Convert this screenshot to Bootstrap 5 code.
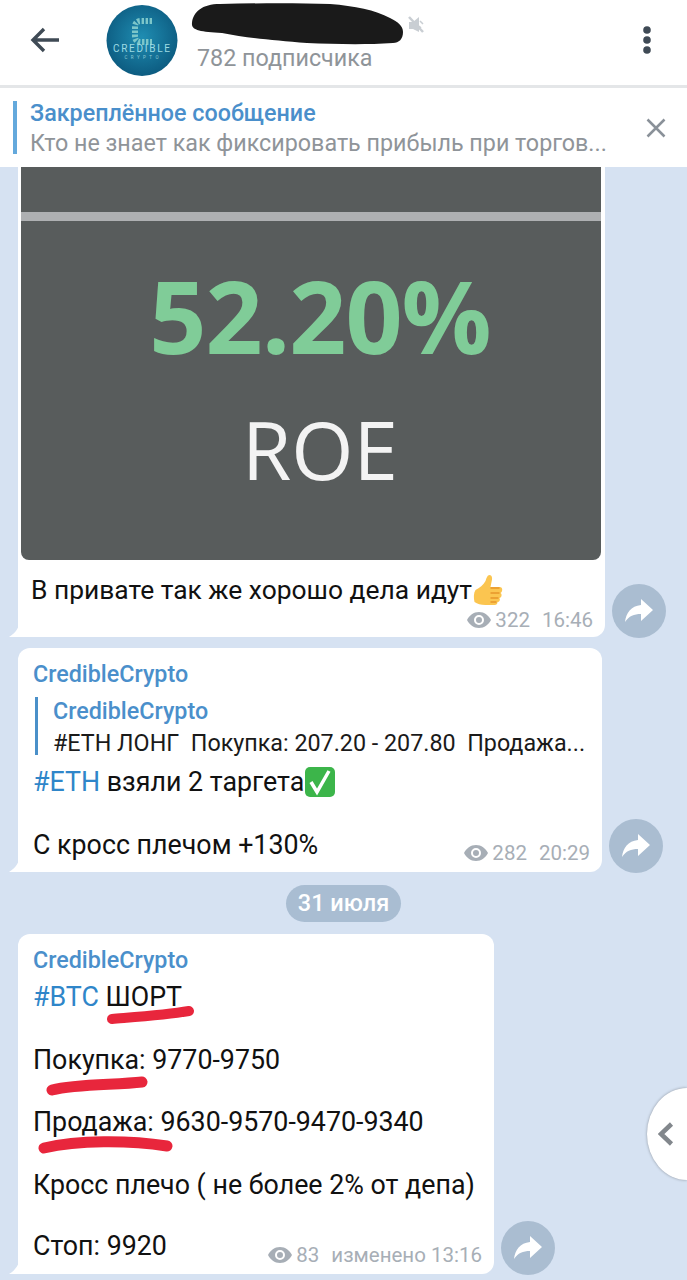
<!DOCTYPE html>
<html lang="ru"><head><meta charset="utf-8">
<link rel="stylesheet" href="https://cdn.jsdelivr.net/npm/bootstrap@5.3.0/dist/css/bootstrap.min.css">
<style>
html,body{height:1280px;overflow:hidden}
body{background:#d6e2f2;font-family:Roboto,"Liberation Sans",sans-serif;color:#111;position:relative;width:687px}
.tg-head{height:88px;background:#fff;border-bottom:3px solid #e4e6e8;padding:0 34px 5px 30px}
.tg-ava{width:72px;height:71px;margin:0 19px 0 0}
.tg-sub{font-size:23.3px;color:#8f9499;line-height:28px;margin-top:44px}
.tg-pin{height:79px;background:#fff;padding:0 21px 0 13px}
.tg-pinbar{width:4px;height:53px;background:#64a9dc;margin-right:13px}
.tg-pintxt{margin-top:2px}
.tg-pint{font-size:23.3px;font-weight:500;color:#4a8fcb;line-height:29px}
.tg-pins{font-size:23.3px;color:#8f9499;line-height:31px;white-space:nowrap}
.bub{background:#fff;border-radius:0 0 12px 0;position:relative}
.bub-a{width:587px;height:470px;margin-left:18px;padding:0 4px 0 3px}
.bub-b{width:584px;height:224px;margin:11px 0 0 18px;border-radius:12px 12px 12px 0;padding:12px 14px 12px 15px}
.bub-c{width:476px;height:340px;margin:0 0 0 18px;border-radius:12px 12px 12px 0;padding:12px 14px 12px 15px}
.tail{position:absolute;left:-9px;bottom:0;width:11px;height:18px}
.shot{height:393px;background:#585c5c;border-radius:0 0 8px 8px;overflow:hidden;padding-left:18px}
.shot-line{height:9px;background:#aeb0b2;margin:45px 0 0 -18px}
.shot-num{font-family:"Open Sans",sans-serif;font-weight:700;font-size:100px;line-height:100px;color:#80cc98;margin-top:44px;letter-spacing:-1px;filter:blur(.6px)}
.shot-roe{font-family:"Open Sans",sans-serif;font-size:80px;line-height:80px;color:#f3f3f3;margin-top:44px;filter:blur(.4px)}
.msgtext{font-size:26.8px;line-height:31px;white-space:nowrap}
.msg-first{margin:14px 0 0 10px;height:32px;font-size:26.4px}
.msg-eth{height:32px}
.msg-cross{margin-top:32px}
.who{font-size:23.3px;font-weight:500;color:#4a8fcb;line-height:28px}
.hash{color:#2f86c9}
.meta{position:absolute;right:12px;bottom:7px;color:#a7aeb6;font-size:20.5px;line-height:24px;white-space:nowrap}
.meta-a{bottom:5px}
.fwd{position:absolute;width:54px;height:54px;border-radius:50%;background:#aabdd1;right:-61px;bottom:-1px}
.reply{border-left:3px solid #4a90c9;padding-left:15px;margin:9px 0 11px 2px;height:58px}
.reply-t{font-size:23.3px;font-weight:500;color:#4a8fcb;line-height:28px}
.reply-s{font-size:23.3px;line-height:30px;margin-top:3px;white-space:nowrap;color:#1a1a1a}
.date-row{height:62px}
.date-pill{background:#a9bdd2;color:#fff;font-size:23.5px;font-weight:500;border-radius:19px;padding:0 12px;height:37px;line-height:37px}
.btc-line{margin-top:8px;height:62.500px}
.ln{height:62.500px}
.ln-s{height:61px}
.scrib{position:absolute;pointer-events:none}
.hidden-name{position:absolute;left:190px;top:0}
.side{position:absolute;right:0;top:1088px;width:40px;height:92px;background:#fff;border-radius:40px 0 0 40px / 46px 0 0 46px;box-shadow:0 0 3px rgba(0,0,0,.35);padding-left:11px}
</style></head><body>
<header class="tg-head d-flex align-items-center">
<svg width="30" height="28" viewBox="0 0 30 28" class="flex-shrink-0" style="margin-right:46px"><path d="M29 14H3.500M14 3 3 14 14 25" fill="none" stroke="#3f4a55" stroke-width="3.400"/></svg>
<svg class="tg-ava flex-shrink-0" viewBox="0 0 72 71"><defs><radialGradient id="g" cx="50%" cy="45%" r="60%"><stop offset="0" stop-color="#1f8db2"/><stop offset="1" stop-color="#0b577c"/></radialGradient></defs><ellipse cx="36" cy="35.500" rx="35.500" ry="35.500" fill="url(#g)"/><path d="M46 16H35Q29 16 29 22V31Q29 37 35 37H46" fill="none" stroke="#7cc6c9" stroke-width="6" stroke-dasharray="2.400 1.600"/><text x="35.500" y="47" text-anchor="middle" font-family="Roboto" font-size="10" fill="#9edbe4" textLength="57">CREDIBLE</text><text x="35.500" y="54" text-anchor="middle" font-family="Roboto" font-size="4.500" fill="#8fcbd8" textLength="34">CRYPTO</text></svg>
<div class="flex-grow-1 align-self-start"><div class="tg-sub">782 подписчика</div></div>
<svg width="12" height="36" viewBox="0 0 12 36"><circle cx="6" cy="8" r="3.800" fill="#3f4a55"/><circle cx="6" cy="18" r="3.800" fill="#3f4a55"/><circle cx="6" cy="28" r="3.800" fill="#3f4a55"/></svg>
</header>
<svg class="hidden-name" width="240" height="50" viewBox="0 0 240 50"><path d="M2 23C3 12 12 4 30 4c40-1 80-1 110 0 25 2 45 6 60 14 8 4 13 8 13 14 0 7-4 11-10 11-30 2-60 1-86 0-35-3-60-5-85-10C10 32 1 30 2 23Z" fill="#1a1a1a"/><g transform="translate(218,17)" fill="#c9ced3"><path d="M1 5h4l6-5v15l-6-3H1Z"/><path d="M1 0 15 15" stroke="#c9ced3" stroke-width="2.500"/><path d="M12 4l3 3M11 9l2 2" stroke="#c9ced3" stroke-width="1.500"/></g></svg>
<section class="tg-pin d-flex align-items-center">
<div class="tg-pinbar flex-shrink-0"></div>
<div class="flex-grow-1 tg-pintxt"><div class="tg-pint">Закреплённое сообщение</div><div class="tg-pins">Кто не знает как фиксировать прибыль при торгов...</div></div>
<svg width="20" height="20" viewBox="0 0 20 20"><path d="M1.500 1.500 18.500 18.500M18.500 1.500 1.500 18.500" stroke="#8a9199" stroke-width="2.500"/></svg>
</section>
<main>
<article class="bub bub-a">
<svg class="tail" viewBox="0 0 11 18"><path d="M11 0C11 7 7 14 0 18H11Z" fill="#fff"/></svg>
<div class="shot text-center"><div class="shot-line"></div><div class="shot-num">52.20%</div><div class="shot-roe">ROE</div></div>
<div class="msgtext msg-first d-flex align-items-center">В привате так же хорошо дела идут<svg width="33" height="32" viewBox="0 0 32 32"><path d="M3 16c4-2 8-5 10-9 1-3 2-6 4-6 3 0 3 4 2 7l-1 5h9c4 0 3 5 1 6 2 1 1 5-1 5 1 2 0 4-2 4 0 2-1 3-3 3H13C8 31 5 30 2 28 1 24 1 19 3 16Z" fill="#fbc550"/><path d="M18 19h9M18 24h8M18 28h6M18 14h9" stroke="#e8952a" stroke-width="1.300"/></svg></div>
<div class="meta meta-a d-flex align-items-center gap-1"><svg width="24" height="16" viewBox="0 0 24 16"><path d="M12 0C6.500 0 2.500 3.500 0 8c2.500 4.500 6.500 8 12 8s9.500-3.500 12-8C21.500 3.500 17.500 0 12 0Zm0 13a5 5 0 1 1 0-10 5 5 0 0 1 0 10Zm0-8a3 3 0 1 0 0 6 3 3 0 0 0 0-6Z" fill="#a7aeb6"/></svg><span>322</span><span class="ms-2">16:46</span></div>
<div class="fwd d-flex align-items-center justify-content-center"><svg width="28" height="24" viewBox="0 0 28 24"><path d="M16 0 28 11 16 22v-7C9 15 4 17 0 23 1 14 6 7 16 6Z" fill="#fff"/></svg></div>
</article>
<article class="bub bub-b">
<svg class="tail" viewBox="0 0 11 18"><path d="M11 0C11 7 7 14 0 18H11Z" fill="#fff"/></svg>
<div class="who">CredibleCrypto</div>
<div class="reply"><div class="reply-t">CredibleCrypto</div><div class="reply-s">#ETH ЛОНГ&nbsp; Покупка: 207.20 - 207.80&nbsp; Продажа...</div></div>
<div class="msgtext msg-eth d-flex align-items-center"><span class="hash">#ETH</span>&nbsp;взяли 2 таргета<svg width="32" height="32" viewBox="0 0 32 32"><rect x="1" y="1" width="30" height="30" rx="5" fill="#3cb54a"/><path d="M7 16l6 10L25 5" fill="none" stroke="#fff" stroke-width="3.500"/></svg></div>
<div class="msgtext msg-cross">С кросс плечом +130%</div>
<div class="meta d-flex align-items-center gap-1"><svg width="24" height="16" viewBox="0 0 24 16"><path d="M12 0C6.500 0 2.500 3.500 0 8c2.500 4.500 6.500 8 12 8s9.500-3.500 12-8C21.500 3.500 17.500 0 12 0Zm0 13a5 5 0 1 1 0-10 5 5 0 0 1 0 10Zm0-8a3 3 0 1 0 0 6 3 3 0 0 0 0-6Z" fill="#a7aeb6"/></svg><span>282</span><span class="ms-2">20:29</span></div>
<div class="fwd d-flex align-items-center justify-content-center"><svg width="28" height="24" viewBox="0 0 28 24"><path d="M16 0 28 11 16 22v-7C9 15 4 17 0 23 1 14 6 7 16 6Z" fill="#fff"/></svg></div>
</article>
<div class="date-row d-flex align-items-center justify-content-center"><div class="date-pill">31 июля</div></div>
<article class="bub bub-c">
<svg class="tail" viewBox="0 0 11 18"><path d="M11 0C11 7 7 14 0 18H11Z" fill="#fff"/></svg>
<div class="who">CredibleCrypto</div>
<div class="msgtext btc-line"><span class="hash">#BTC</span> ШОРТ</div>
<div class="msgtext ln">Покупка: 9770-9750</div>
<div class="msgtext ln">Продажа: 9630-9570-9470-9340</div>
<div class="msgtext ln-s">Кросс плечо ( не более 2% от депа)</div>
<div class="msgtext">Стоп: 9920</div>
<div class="meta d-flex align-items-center gap-1"><svg width="24" height="16" viewBox="0 0 24 16"><path d="M12 0C6.500 0 2.500 3.500 0 8c2.500 4.500 6.500 8 12 8s9.500-3.500 12-8C21.500 3.500 17.500 0 12 0Zm0 13a5 5 0 1 1 0-10 5 5 0 0 1 0 10Zm0-8a3 3 0 1 0 0 6 3 3 0 0 0 0-6Z" fill="#a7aeb6"/></svg><span>83</span><span class="ms-2">изменено 13:16</span></div>
<div class="fwd d-flex align-items-center justify-content-center"><svg width="28" height="24" viewBox="0 0 28 24"><path d="M16 0 28 11 16 22v-7C9 15 4 17 0 23 1 14 6 7 16 6Z" fill="#fff"/></svg></div>
<svg class="scrib" style="left:88px;top:70px" width="90" height="22" viewBox="0 0 90 22"><path d="M6 15C30 13 60 11 83 7" stroke="#e8263c" stroke-width="10" stroke-linecap="round" fill="none"/></svg>
<svg class="scrib" style="left:28px;top:142px" width="104" height="22" viewBox="0 0 104 22"><path d="M6 14C30 8 70 9 96 6" stroke="#e8263c" stroke-width="11" stroke-linecap="round" fill="none"/></svg>
<svg class="scrib" style="left:20px;top:200px" width="136" height="22" viewBox="0 0 136 22"><path d="M6 14C40 6 90 6 129 12" stroke="#e8263c" stroke-width="11" stroke-linecap="round" fill="none"/></svg>
</article>
</main>
<aside class="side d-flex align-items-center"><svg width="16" height="24" viewBox="0 0 16 24"><path d="M13.500 2 3 12l10.500 10" fill="none" stroke="#82878c" stroke-width="4.500"/></svg></aside>
<script src="https://cdn.jsdelivr.net/npm/bootstrap@5.3.0/dist/js/bootstrap.bundle.min.js"></script>
</body></html>
